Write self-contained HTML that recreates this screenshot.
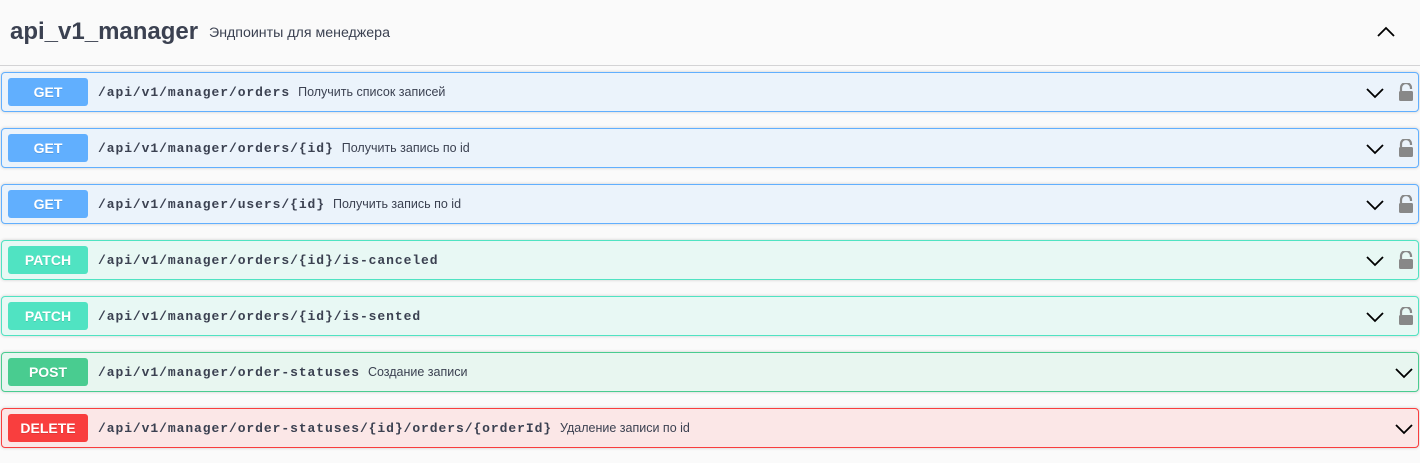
<!DOCTYPE html>
<html><head><meta charset="utf-8"><style>
body{margin:0;background:#fafafa;width:1420px;height:463px;overflow:hidden;font-family:"Liberation Sans",sans-serif;color:#3b4151}
.hdr{position:absolute;left:0;top:0;width:1420px;height:66px;border-bottom:1px solid #d3d3d5;box-sizing:border-box}
.hdr .t{position:absolute;left:10px;top:18px;font-size:24px;font-weight:bold;color:#3b4151}
.hdr .d{position:absolute;left:209px;top:25px;font-size:14.2px}
.hdr svg{position:absolute;left:1377px;top:25px}
.op{position:absolute;left:1px;width:1418px;height:40px;box-sizing:border-box;border:1px solid;border-radius:4px;box-shadow:0 0 3px rgba(0,0,0,.19)}
.b{position:absolute;left:6px;top:5px;width:80px;height:28px;border-radius:3px;color:#fff;font-weight:bold;font-size:14px;text-align:center;line-height:28px;text-shadow:0 1px 0 rgba(0,0,0,.1)}
.p{position:absolute;left:96px;top:12px;font-family:"Liberation Mono",monospace;font-weight:bold;font-size:13px;letter-spacing:0.93px;color:#3b4151}
.s{font-family:"Liberation Sans",sans-serif;font-weight:normal;font-size:12.5px;letter-spacing:0;margin-left:8px}
.ch{position:absolute;left:1364px;top:13px}
.lk{position:absolute;left:1396px;top:10px}
.get{background:#ebf3fb;border-color:#61affe}.get .b{background:#61affe}
.pat{background:#e8f8f4;border-color:#50e3c2}.pat .b{background:#50e3c2}
.pos{background:#e8f6f0;border-color:#49cc90}.pos .b{background:#49cc90}
.del{background:#fbe7e7;border-color:#f93e3e}.del .b{background:#f93e3e}
.pos .ch,.del .ch{left:1393px}
</style></head><body>
<div class="hdr"><span class="t">api_v1_manager</span><span class="d">Эндпоинты для менеджера</span>
<svg width="18" height="14" viewBox="0 0 18 14"><path d="M1 11 L9 3 L17 11" fill="none" stroke="#000" stroke-width="1.8"/></svg></div>

<div class="op get" style="top:72px"><div class="b">GET</div><div class="p">/api/v1/manager/orders<span class="s">Получить список записей</span></div>
<svg class="ch" width="18" height="14"><path d="M1 3 L9 11 L17 3" fill="none" stroke="#000" stroke-width="1.8"/></svg>
<svg class="lk" width="16" height="18" viewBox="0 0 16 18"><path d="M3 8 V5 a5 5 0 0 1 10 0 V6" fill="none" stroke="#888" stroke-width="2.2"/><rect x="1" y="8" width="14" height="10" rx="1.5" fill="#888"/></svg></div>

<div class="op get" style="top:128px"><div class="b">GET</div><div class="p">/api/v1/manager/orders/{id}<span class="s">Получить запись по id</span></div>
<svg class="ch" width="18" height="14"><path d="M1 3 L9 11 L17 3" fill="none" stroke="#000" stroke-width="1.8"/></svg>
<svg class="lk" width="16" height="18" viewBox="0 0 16 18"><path d="M3 8 V5 a5 5 0 0 1 10 0 V6" fill="none" stroke="#888" stroke-width="2.2"/><rect x="1" y="8" width="14" height="10" rx="1.5" fill="#888"/></svg></div>

<div class="op get" style="top:184px"><div class="b">GET</div><div class="p">/api/v1/manager/users/{id}<span class="s">Получить запись по id</span></div>
<svg class="ch" width="18" height="14"><path d="M1 3 L9 11 L17 3" fill="none" stroke="#000" stroke-width="1.8"/></svg>
<svg class="lk" width="16" height="18" viewBox="0 0 16 18"><path d="M3 8 V5 a5 5 0 0 1 10 0 V6" fill="none" stroke="#888" stroke-width="2.2"/><rect x="1" y="8" width="14" height="10" rx="1.5" fill="#888"/></svg></div>

<div class="op pat" style="top:240px"><div class="b">PATCH</div><div class="p">/api/v1/manager/orders/{id}/is-canceled</div>
<svg class="ch" width="18" height="14"><path d="M1 3 L9 11 L17 3" fill="none" stroke="#000" stroke-width="1.8"/></svg>
<svg class="lk" width="16" height="18" viewBox="0 0 16 18"><path d="M3 8 V5 a5 5 0 0 1 10 0 V6" fill="none" stroke="#888" stroke-width="2.2"/><rect x="1" y="8" width="14" height="10" rx="1.5" fill="#888"/></svg></div>

<div class="op pat" style="top:296px"><div class="b">PATCH</div><div class="p">/api/v1/manager/orders/{id}/is-sented</div>
<svg class="ch" width="18" height="14"><path d="M1 3 L9 11 L17 3" fill="none" stroke="#000" stroke-width="1.8"/></svg>
<svg class="lk" width="16" height="18" viewBox="0 0 16 18"><path d="M3 8 V5 a5 5 0 0 1 10 0 V6" fill="none" stroke="#888" stroke-width="2.2"/><rect x="1" y="8" width="14" height="10" rx="1.5" fill="#888"/></svg></div>

<div class="op pos" style="top:352px"><div class="b">POST</div><div class="p">/api/v1/manager/order-statuses<span class="s">Создание записи</span></div>
<svg class="ch" width="18" height="14"><path d="M1 3 L9 11 L17 3" fill="none" stroke="#000" stroke-width="1.8"/></svg></div>

<div class="op del" style="top:408px"><div class="b">DELETE</div><div class="p">/api/v1/manager/order-statuses/{id}/orders/{orderId}<span class="s">Удаление записи по id</span></div>
<svg class="ch" width="18" height="14"><path d="M1 3 L9 11 L17 3" fill="none" stroke="#000" stroke-width="1.8"/></svg></div>
</body></html>
